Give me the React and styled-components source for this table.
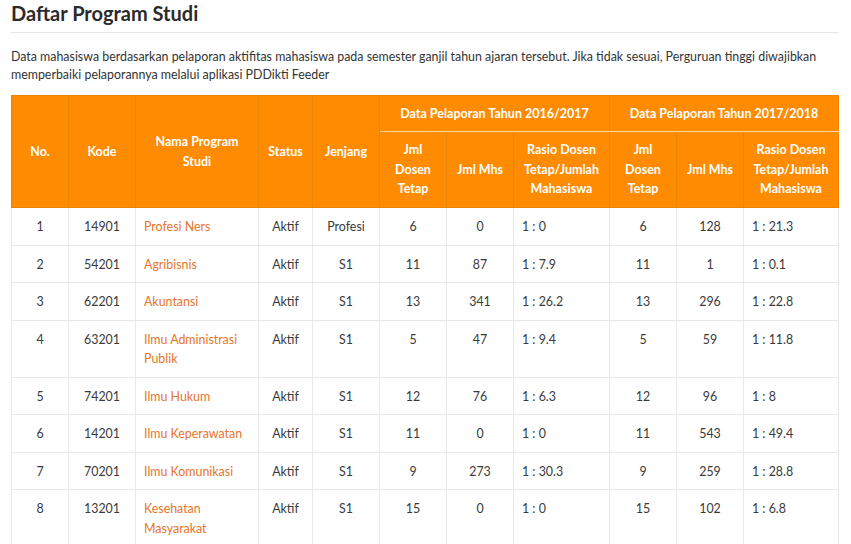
import React from 'react'
import styled, { createGlobalStyle } from 'styled-components'

const GlobalStyle = createGlobalStyle`
  body {
    margin: 0;
    background: #fff;
    font-family: 'Lato', 'Noto Sans', sans-serif;
    color: #333;
  }
`

const rows = [
  { no: 1, kode: '14901', nama: 'Profesi Ners', status: 'Aktif', jenjang: 'Profesi', d1: 6, m1: 0, r1: '1 : 0', d2: 6, m2: 128, r2: '1 : 21.3' },
  { no: 2, kode: '54201', nama: 'Agribisnis', status: 'Aktif', jenjang: 'S1', d1: 11, m1: 87, r1: '1 : 7.9', d2: 11, m2: 1, r2: '1 : 0.1' },
  { no: 3, kode: '62201', nama: 'Akuntansi', status: 'Aktif', jenjang: 'S1', d1: 13, m1: 341, r1: '1 : 26.2', d2: 13, m2: 296, r2: '1 : 22.8' },
  { no: 4, kode: '63201', nama: 'Ilmu Administrasi Publik', status: 'Aktif', jenjang: 'S1', d1: 5, m1: 47, r1: '1 : 9.4', d2: 5, m2: 59, r2: '1 : 11.8' },
  { no: 5, kode: '74201', nama: 'Ilmu Hukum', status: 'Aktif', jenjang: 'S1', d1: 12, m1: 76, r1: '1 : 6.3', d2: 12, m2: 96, r2: '1 : 8' },
  { no: 6, kode: '14201', nama: 'Ilmu Keperawatan', status: 'Aktif', jenjang: 'S1', d1: 11, m1: 0, r1: '1 : 0', d2: 11, m2: 543, r2: '1 : 49.4' },
  { no: 7, kode: '70201', nama: 'Ilmu Komunikasi', status: 'Aktif', jenjang: 'S1', d1: 9, m1: 273, r1: '1 : 30.3', d2: 9, m2: 259, r2: '1 : 28.8' },
  { no: 8, kode: '13201', nama: 'Kesehatan Masyarakat', status: 'Aktif', jenjang: 'S1', d1: 15, m1: 0, r1: '1 : 0', d2: 15, m2: 102, r2: '1 : 6.8' },
]

const widths = [57, 67, 123, 54, 67, 67, 67, 96, 67, 67, 95]

const App = () => {
  return (
    <>
      <GlobalStyle />
      <Page>
        <Title>Daftar Program Studi</Title>
        <Intro>
          Data mahasiswa berdasarkan pelaporan aktifitas mahasiswa pada semester ganjil tahun ajaran tersebut. Jika tidak sesuai, Perguruan tinggi diwajibkan memperbaiki pelaporannya melalui aplikasi PDDikti Feeder
        </Intro>
        <Table>
          <colgroup>
            {widths.map((w, i) => <col key={i} style={{ width: w }} />)}
          </colgroup>
          <thead>
            <HeadRow top>
              <Th rowSpan={2}>No.</Th>
              <Th rowSpan={2}>Kode</Th>
              <Th rowSpan={2}>Nama Program<br />Studi</Th>
              <Th rowSpan={2}>Status</Th>
              <Th rowSpan={2}>Jenjang</Th>
              <Th colSpan={3} group>Data Pelaporan Tahun 2016/2017</Th>
              <Th colSpan={3} group>Data Pelaporan Tahun 2017/2018</Th>
            </HeadRow>
            <HeadRow>
              <Th>Jml<br />Dosen<br />Tetap</Th>
              <Th>Jml Mhs</Th>
              <Th>Rasio Dosen<br />Tetap/Jumlah<br />Mahasiswa</Th>
              <Th>Jml<br />Dosen<br />Tetap</Th>
              <Th>Jml Mhs</Th>
              <Th>Rasio Dosen<br />Tetap/Jumlah<br />Mahasiswa</Th>
            </HeadRow>
          </thead>
          <tbody>
            {rows.map(r => (
              <tr key={r.no}>
                <Td center>{r.no}</Td>
                <Td center>{r.kode}</Td>
                <Td><Link href="#">{r.nama}</Link></Td>
                <Td center>{r.status}</Td>
                <Td center>{r.jenjang}</Td>
                <Td center>{r.d1}</Td>
                <Td center>{r.m1}</Td>
                <Td>{r.r1}</Td>
                <Td center>{r.d2}</Td>
                <Td center>{r.m2}</Td>
                <Td>{r.r2}</Td>
              </tr>
            ))}
          </tbody>
        </Table>
      </Page>
    </>
  )
}

const Page = styled.div`
  width: 828px;
  padding: 0 0 0 11px;
`

const Title = styled.h2`
  margin: 0;
  padding: 2px 0 8px;
  font-size: 20px;
  font-weight: 700;
  line-height: 22px;
  color: #2b2b2b;
  border-bottom: 1px solid #e6e6e6;
`

const Intro = styled.p`
  margin: 15px 0 11px;
  font-size: 12.4px;
  line-height: 18px;
  color: #333;
`

const Table = styled.table`
  width: 828px;
  table-layout: fixed;
  border-collapse: collapse;
  font-size: 12.4px;
`

const HeadRow = styled.tr`
  height: ${p => (p.top ? '36px' : '76px')};
`

const Th = styled.th`
  background: #ff8c00;
  color: #fff;
  font-weight: 700;
  font-size: 12.5px;
  line-height: 19.5px;
  padding: 0 4px;
  text-align: center;
  vertical-align: middle;
  border: 1px solid #ec8500;
  border-bottom: 1px solid ${p => (p.group ? '#ffd79a' : '#ec8500')};
`

const Td = styled.td`
  padding: 9px 8px 8px;
  line-height: 19.5px;
  vertical-align: top;
  text-align: ${p => (p.center ? 'center' : 'left')};
  border: 1px solid #e8e8e8;
  color: #3a3a3a;
  font-weight: 400;
`

const Link = styled.a`
  color: #e8742a;
  text-decoration: none;
`

export default App
